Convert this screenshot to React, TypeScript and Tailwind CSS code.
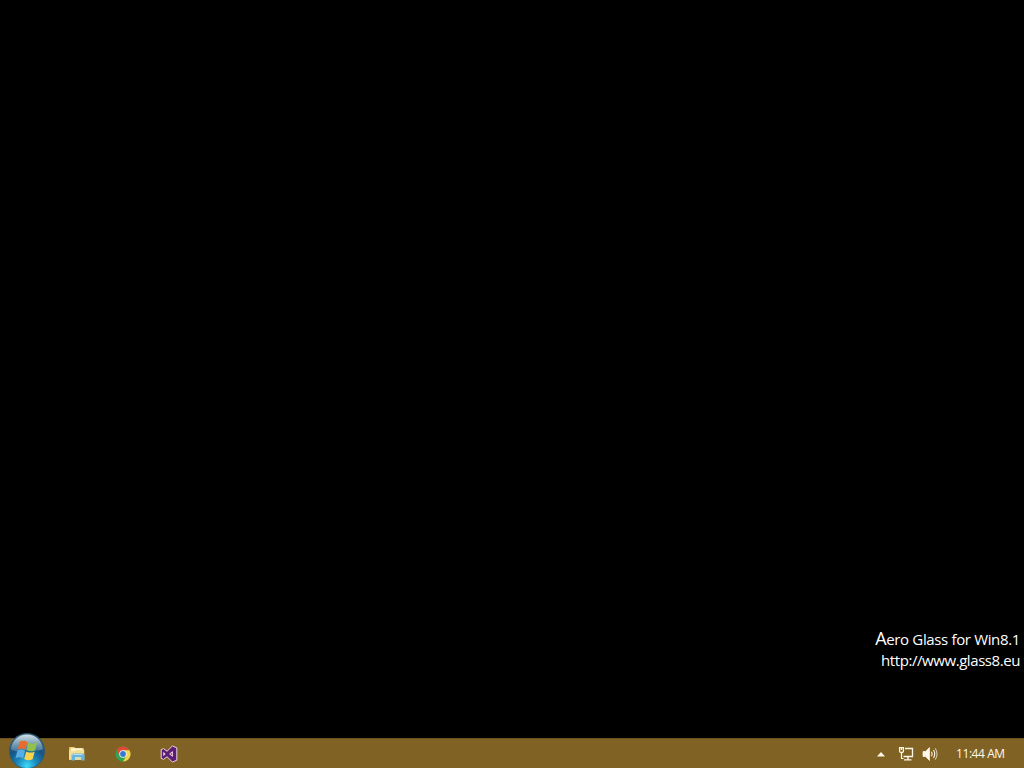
import type { ReactNode } from 'react';

interface TaskButtonProps {
  label: string;
  children: ReactNode;
}

function StartOrb() {
  return (
    <svg width="38" height="38" viewBox="0 0 38 38">
      <defs>
        <radialGradient id="orb" cx="50%" cy="92%" r="88%">
          <stop offset="0" stopColor="#3fdcf8" />
          <stop offset="0.3" stopColor="#1c8cc0" />
          <stop offset="0.62" stopColor="#165585" />
          <stop offset="1" stopColor="#3f627c" />
        </radialGradient>
        <linearGradient id="orbShine" x1="0" y1="0" x2="0" y2="1">
          <stop offset="0" stopColor="#d9e8ee" stopOpacity="0.95" />
          <stop offset="1" stopColor="#8fb4c4" stopOpacity="0.35" />
        </linearGradient>
      </defs>
      <circle cx="19" cy="19" r="17.6" fill="url(#orb)" stroke="#2c5873" strokeWidth="0.8" />
      <path d="M3 17C4 8 11 2.4 19 2.4S34 8 35 17C29 20.5 24 17 19 18S8 21 3 17Z" fill="url(#orbShine)" />
      {/* Flag panes */}
      <g transform="translate(-1.2 -1.9) scale(1.08)">
        <path d="M12 10.6C14.5 9.4 16.5 9.5 19 11L17.2 18C15 16.7 12.8 16.7 10.2 17.8Z" fill="#ea6a2c" />
        <path d="M20 11.5C22.6 13 25 13 28 11.8L26.1 18.8C23.3 20.1 20.8 19.9 18.3 18.5Z" fill="#93c04a" />
        <path d="M9.9 19C12.5 17.8 14.7 18 16.9 19.2L15.1 26.2C12.8 24.8 10.6 24.9 8 26Z" fill="#58aee4" />
        <path d="M18 19.7C20.5 21.1 23 21.2 25.8 20L23.9 27.1C21.2 28.3 18.6 28.2 16.1 26.8Z" fill="#f9d24e" />
      </g>
    </svg>
  );
}

function FolderIcon() {
  return (
    <svg width="18" height="16" viewBox="0 0 18 16">
      <path d="M1 2.2Q1 1 2 1H6.3L7.5 2.2H15Q16 2.2 16 3.2V14H2Q1 14 1 13Z" fill="#e9cf76" />
      <path d="M3 2.2H14.5V5H3Z" fill="#fff5cf" />
      <path d="M1 5H7L8 4H16.2V13.5H1Z" fill="#f5df94" />
      <path d="M3.5 14.5V9.5Q3.5 7.5 5.5 7.5H14.5Q16.5 7.5 16.5 9.5V14.5H13V11H7V14.5Z" fill="#69b4da" />
      <path d="M4.5 9.5Q4.5 8.5 5.5 8.5H14.5" fill="none" stroke="#b5dfec" />
      <path d="M7 11H13V13H7Z" fill="#c9dfc8" />
    </svg>
  );
}

function ChromeIcon() {
  return (
    <svg width="16" height="16" viewBox="0 0 16 16">
      <circle cx="8" cy="8" r="7.5" fill="#30a552" />
      <path d="M1.5 4.25A7.5 7.5 0 0 1 14.5 4.25H8L4.8 9.9Z" fill="#df493b" />
      <path d="M14.5 4.25A7.5 7.5 0 0 1 8 15.5L11.25 9.9L8 4.25Z" fill="#f8d247" />
      <circle cx="8" cy="8" r="3.75" fill="#f6f5ed" />
      <circle cx="8" cy="8" r="2.9" fill="#3579d5" />
    </svg>
  );
}

function VisualStudioIcon() {
  return (
    <svg width="18" height="18" viewBox="0 0 18 18">
      <path
        fillRule="evenodd"
        d="M1.2 4.6L3.6 3.6L7 6.3L12.4 1L16.8 2.8V15.2L12.4 17L7 11.7L3.6 14.4L1.2 13.4ZM3.7 7.6V10.4L5.2 9ZM9.6 9L12.4 11.3V6.7Z"
        fill="#5c1c78"
        stroke="#f3e4ee"
        strokeWidth="0.9"
        strokeLinejoin="round"
      />
    </svg>
  );
}

function NetworkIcon() {
  return (
    <svg width="16" height="16" viewBox="0 0 16 16" fill="none" stroke="#fff7e8">
      <path d="M7 2.5H14.5V10.5H5.5" strokeWidth="1.3" />
      <path d="M10 11V13.5M6 13.9H13.5" strokeWidth="1.4" />
      <path d="M1.6 1.6H5.4V5Q5.4 6.5 4 6.5H3Q1.6 6.5 1.6 5Z" strokeWidth="1.3" />
      <path d="M3.5 2V4M3.5 6.5V12.5H5.5" strokeWidth="1.2" />
    </svg>
  );
}

function VolumeIcon() {
  return (
    <svg width="16" height="16" viewBox="0 0 16 16" fill="none" stroke="#fff7e8">
      <path d="M1 5.5H3.5L7.5 1.5V14.5L3.5 10.5H1Z" fill="#fff7e8" strokeWidth="0.7" />
      <path d="M9.5 5.7Q11 8 9.5 10.3M11.5 4Q14 8 11.5 12" strokeWidth="1.1" />
      <path d="M13.3 2.3Q16.7 8 13.3 13.7" strokeWidth="1" opacity="0.75" />
    </svg>
  );
}

function TaskButton({ label, children }: TaskButtonProps) {
  return (
    <button aria-label={label} className="flex h-[30px] w-[46px] items-center justify-center">
      {children}
    </button>
  );
}

function Watermark() {
  return (
    <div className="flex flex-col items-end pr-1 pb-[67px] font-['Open_Sans','Noto_Sans',sans-serif] text-[15px] leading-[21px] text-white">
      <div className="whitespace-nowrap tracking-[-0.35px]">
        <span className="text-[18px] leading-[15px]">A</span>ero Glass for Win8.1
      </div>
      <div className="whitespace-nowrap tracking-[-0.43px]">http://www.glass8.eu</div>
    </div>
  );
}

function Taskbar() {
  return (
    <footer className="flex h-[30px] shrink-0 items-center border-t border-[#6b531e] bg-[#806324]">
      <button aria-label="Start" className="-mt-[5px] ml-2 h-[38px] w-[38px] shrink-0">
        <StartOrb />
      </button>
      <nav className="ml-2 flex">
        <TaskButton label="File Explorer">
          <FolderIcon />
        </TaskButton>
        <TaskButton label="Google Chrome">
          <ChromeIcon />
        </TaskButton>
        <TaskButton label="Visual Studio">
          <VisualStudioIcon />
        </TaskButton>
      </nav>
      <div className="ml-auto flex items-center">
        <svg width="8" height="5" viewBox="0 0 8 5" className="mt-px mr-[13px]">
          <path d="M4 0L8 4.5H0Z" fill="#fff7e8" />
        </svg>
        <NetworkIcon />
        <div className="ml-2">
          <VolumeIcon />
        </div>
        <time className="mr-[19px] ml-[18px] w-[49px] whitespace-nowrap font-['Open_Sans','Noto_Sans',sans-serif] text-[12px] leading-[16px] tracking-[-0.42px] text-[#fff9ed]">
          11:44 AM
        </time>
      </div>
    </footer>
  );
}

export default function App() {
  return (
    <div className="flex h-screen flex-col overflow-hidden bg-black">
      <main className="flex flex-1 flex-col justify-end">
        <Watermark />
      </main>
      <Taskbar />
    </div>
  );
}
